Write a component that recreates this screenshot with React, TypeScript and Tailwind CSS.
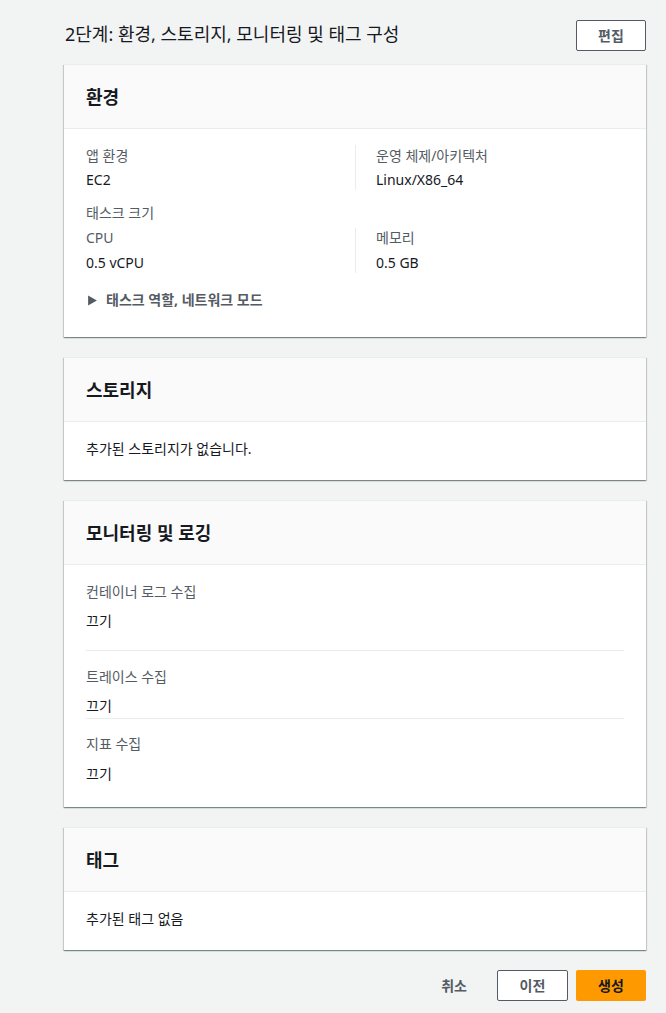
import React from 'react';

const font = { fontFamily: '"Noto Sans", "Noto Sans CJK KR", sans-serif' };

const Card: React.FC<{ title: string; children: React.ReactNode; bodyClass?: string }> = ({ title, children, bodyClass }) => (
  <section className="bg-white shadow-[0_1px_1px_0_rgba(0,28,36,0.3),1px_1px_1px_0_rgba(0,28,36,0.15),-1px_1px_1px_0_rgba(0,28,36,0.15)] border-t border-[#eaeded]">
    <div className="h-[64px] bg-[#fafafa] border-b border-[#eaeded] px-[22px] flex items-center">
      <h2 className="text-[18px] font-bold text-[#16191f] leading-[24px]">{title}</h2>
    </div>
    <div className={bodyClass ?? 'px-[22px] pt-[17px] pb-[21px]'}>{children}</div>
  </section>
);

const Label: React.FC<{ children: React.ReactNode; className?: string }> = ({ children, className }) => (
  <div className={`text-[14px] leading-[20px] text-[#545b64] ${className ?? ''}`}>{children}</div>
);
const Value: React.FC<{ children: React.ReactNode; className?: string }> = ({ children, className }) => (
  <div className={`text-[14px] leading-[20px] text-[#16191f] ${className ?? ''}`}>{children}</div>
);

export default function App() {
  return (
    <div className="min-h-[1013px] bg-[#f2f3f3] pl-[64px] pr-[20px] pt-[20px]" style={font}>
      <div className="flex items-center justify-between">
        <h1 className="text-[18px] leading-[26px] text-[#16191f] pl-[1px] -mt-[4px]">2단계: 환경, 스토리지, 모니터링 및 태그 구성</h1>
        <button className="w-[70px] h-[31px] border border-[#545b64] rounded-[2px] bg-white text-[14px] font-bold text-[#545b64]">편집</button>
      </div>

      <div className="mt-[13px] flex flex-col gap-[20px]">
        <Card title="환경" bodyClass="px-[22px] pt-[17px] pb-[27px]">
          <div className="grid grid-cols-2">
            <div>
              <Label>앱 환경</Label>
              <Value className="mt-[4px]">EC2</Value>
            </div>
            <div className="border-l border-[#eaeded] pl-[20px] -mt-[1px] pt-[1px]">
              <Label>운영 체제/아키텍처</Label>
              <Value className="mt-[4px]">Linux/X86_64</Value>
            </div>
          </div>
          <Label className="mt-[13px]">태스크 크기</Label>
          <div className="grid grid-cols-2 mt-[5px]">
            <div>
              <Label>CPU</Label>
              <Value className="mt-[5px]">0.5 vCPU</Value>
            </div>
            <div className="border-l border-[#eaeded] pl-[20px]">
              <Label>메모리</Label>
              <Value className="mt-[5px]">0.5 GB</Value>
            </div>
          </div>
          <div className="mt-[17px] flex items-center gap-[8px] text-[14px] leading-[20px] font-bold text-[#545b64]">
            <svg width="11" height="11" viewBox="0 0 10 10" className="ml-[1px]">
              <path d="M1 0.5 L9 5 L1 9.5 Z" fill="#545b64" />
            </svg>
            <span>태스크 역할, 네트워크 모드</span>
          </div>
        </Card>

        <Card title="스토리지">
          <Value>추가된 스토리지가 없습니다.</Value>
        </Card>

        <Card title="모니터링 및 로깅" bodyClass="px-[22px] pt-[17px] pb-[23px]">
          <Label>컨테이너 로그 수집</Label>
          <Value className="mt-[9px]">끄기</Value>
          <div className="mt-[19px] border-t border-[#eaeded]" />
          <Label className="mt-[16px]">트레이스 수집</Label>
          <Value className="mt-[9px]">끄기</Value>
          <div className="mt-[2px] border-t border-[#eaeded]" />
          <Label className="mt-[15px]">지표 수집</Label>
          <Value className="mt-[10px]">끄기</Value>
        </Card>

        <Card title="태그">
          <Value>추가된 태그 없음</Value>
        </Card>
      </div>

      <div className="mt-[20px] flex items-center justify-end gap-[8px]">
        <button className="h-[31px] px-[20px] text-[14px] font-semibold text-[#545b64] mr-[2px]">취소</button>
        <button className="w-[71px] h-[31px] border border-[#545b64] rounded-[2px] bg-white text-[14px] font-bold text-[#545b64]">이전</button>
        <button className="w-[70px] h-[31px] rounded-[2px] bg-[#ff9900] text-[14px] font-bold text-[#16191f]">생성</button>
      </div>
    </div>
  );
}
